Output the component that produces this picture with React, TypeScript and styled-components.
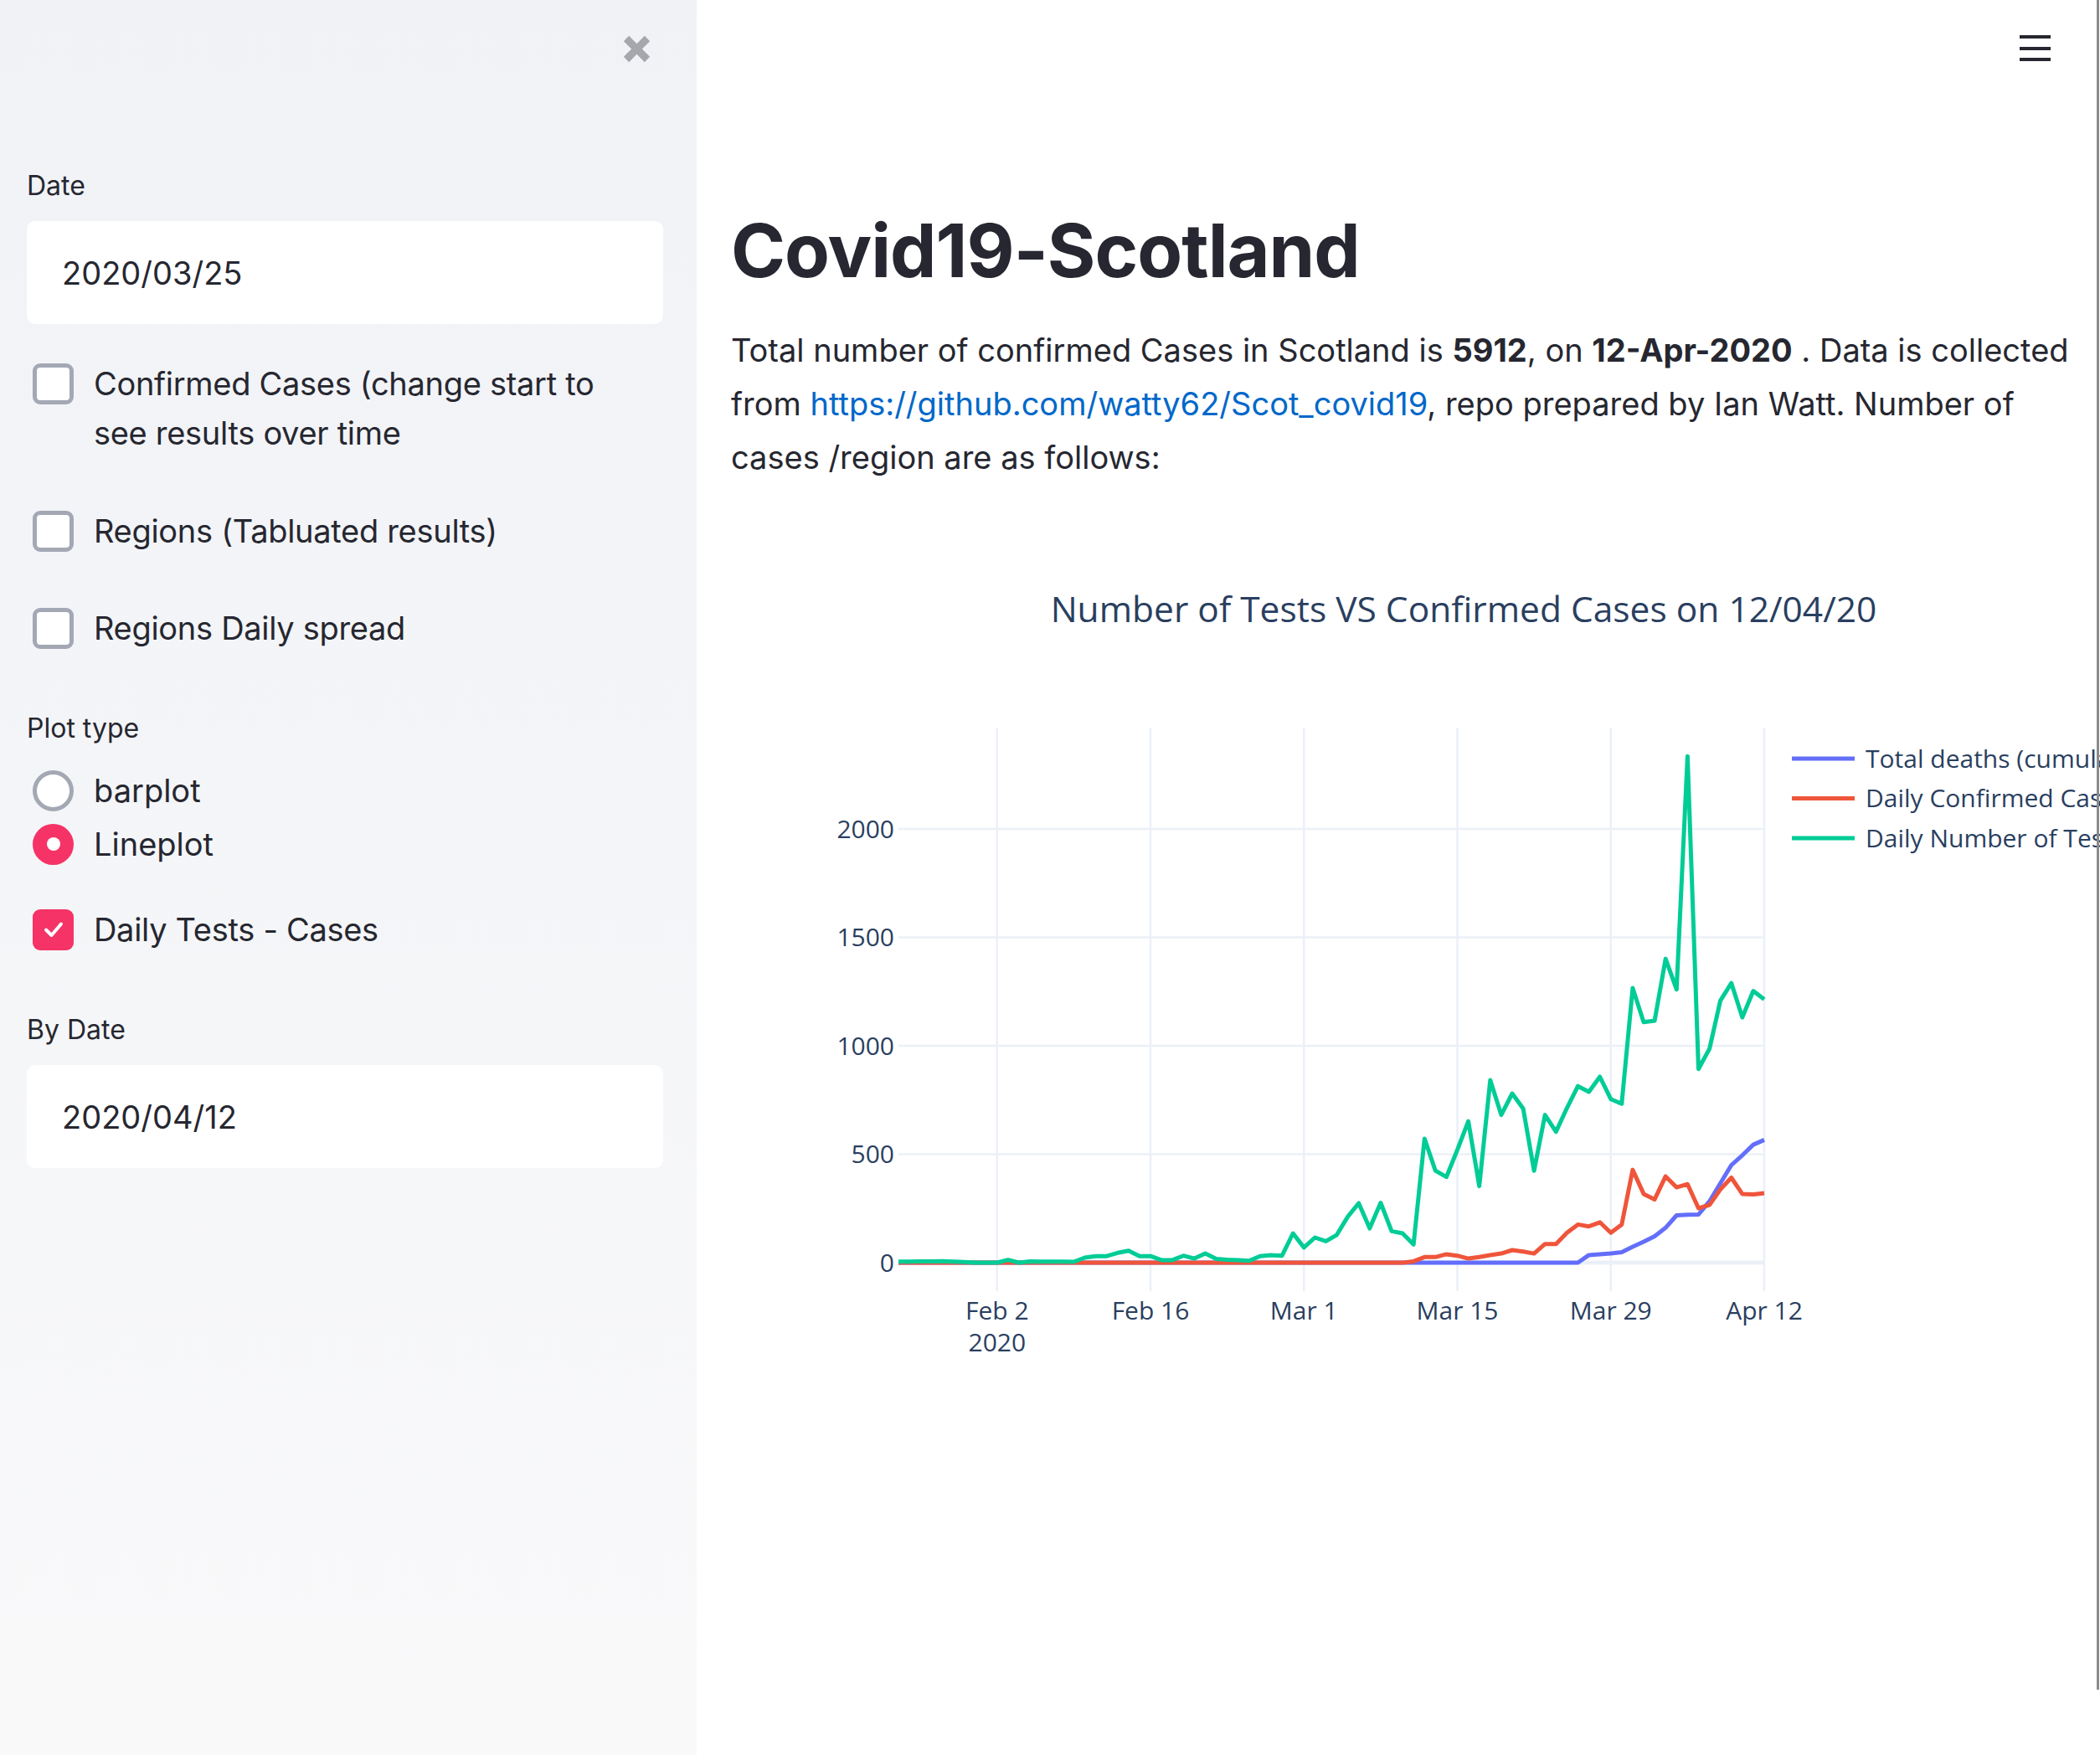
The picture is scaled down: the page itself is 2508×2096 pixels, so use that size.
import React from "react";
import styled, { createGlobalStyle } from "styled-components";

const GlobalStyle = createGlobalStyle`
	html,
	body {
		margin: 0;
		padding: 0;
		overflow: hidden;
	}

	body {
		font-family: Inter, "Noto Sans", sans-serif;
		color: #262730;
		background: #ffffff;
	}

	* {
		box-sizing: border-box;
	}
`;

/* chart data, one value per day from Jan 24 to Apr 12 */
const tests = [
	5, 5, 6, 6, 7, 5, 3, 0, 0, 0, 13, 0, 6, 5, 5, 5, 4, 23, 30, 30, 45, 55, 30, 30, 12, 12, 32, 19, 42, 17, 14, 12, 9, 30,
	35, 32, 135, 70, 116, 99, 128, 212, 274, 158, 276, 145, 135, 84, 572, 424, 395, 520, 652, 353, 842, 681, 780, 711, 424,
	681, 604, 713, 814, 788, 857, 754, 733, 1266, 1109, 1116, 1401, 1260, 2335, 893, 986, 1208, 1289, 1131, 1253, 1214,
];

const confirmed = [
	...Array(47).fill(0),
	6, 26, 26, 39, 32, 19, 26, 35, 42, 58, 51, 42, 86, 86, 138, 176, 167, 186, 138, 176, 428, 317, 292, 398, 347, 362, 251,
	266, 338, 392, 317, 315, 321,
];

const deaths = [
	...Array(63).fill(0),
	35, 39, 42, 48, 73, 96, 122, 161, 218, 221, 222, 283, 366, 450, 495, 544, 566,
];

const PLOT_LEFT = 200;
const PLOT_RIGHT = 1234;
const PLOT_TOP = 250;
const PLOT_BOTTOM = 923;
const ZERO_Y = 889;
const PX_PER_UNIT = 0.259;
const DAYS = 79;

const dayX = (d: number) => PLOT_LEFT + (d * (PLOT_RIGHT - PLOT_LEFT)) / DAYS;
const valY = (v: number) => ZERO_Y - v * PX_PER_UNIT;
const toPoints = (values: number[]) => values.map((v, i) => `${dayX(i).toFixed(1)},${valY(v).toFixed(1)}`).join(" ");

const xTicks = [
	{ day: 9, label: "Feb 2", sub: "2020" },
	{ day: 23, label: "Feb 16" },
	{ day: 37, label: "Mar 1" },
	{ day: 51, label: "Mar 15" },
	{ day: 65, label: "Mar 29" },
	{ day: 79, label: "Apr 12" },
];

const yTicks = [0, 500, 1000, 1500, 2000];

const series = [
	{ name: "Total deaths (cumulative)", color: "#636efa", values: deaths },
	{ name: "Daily Confirmed Cases", color: "#ef553b", values: confirmed },
	{ name: "Daily Number of Tests", color: "#00cc96", values: tests },
];

const App: React.FC = () => {
	return (
		<>
			<GlobalStyle />
			<Page>
				<Sidebar>
					<CloseRow>
						<CloseButton aria-label="Close sidebar">
							<svg width="35" height="35" viewBox="0 0 35 35">
								<path d="M5 5 L30 30 M30 5 L5 30" stroke="#a5a7ad" strokeWidth="9" strokeLinecap="butt" />
							</svg>
						</CloseButton>
					</CloseRow>

					<WidgetLabel $mt={126}>Date</WidgetLabel>
					<DateField $mt={22}>2020/03/25</DateField>

					<CheckRow $mt={41.5}>
						<CheckBox $checked={false} />
						<CheckText>Confirmed Cases (change start to see results over time</CheckText>
					</CheckRow>
					<CheckRow $mt={58}>
						<CheckBox $checked={false} />
						<CheckText>Regions (Tabluated results)</CheckText>
					</CheckRow>
					<CheckRow $mt={57}>
						<CheckBox $checked={false} />
						<CheckText>Regions Daily spread</CheckText>
					</CheckRow>

					<WidgetLabel $mt={70.5}>Plot type</WidgetLabel>
					<RadioGroup $mt={22}>
						<RadioRow>
							<RadioDot $selected={false} />
							<span>barplot</span>
						</RadioRow>
						<RadioRow>
							<RadioDot $selected={true} />
							<span>Lineplot</span>
						</RadioRow>
					</RadioGroup>

					<CheckRow $mt={40.5}>
						<CheckBox $checked={true}>
							<svg width="28" height="28" viewBox="0 0 28 28">
								<path d="M5 14.5 L11.5 21 L23 7.5" stroke="#ffffff" strokeWidth="4" fill="none" strokeLinecap="round" strokeLinejoin="round" />
							</svg>
						</CheckBox>
						<CheckText>Daily Tests - Cases</CheckText>
					</CheckRow>

					<WidgetLabel $mt={70.5}>By Date</WidgetLabel>
					<DateField $mt={22}>2020/04/12</DateField>
				</Sidebar>

				<Main>
					<TopBar>
						<MenuButton aria-label="Menu">
							<MenuLine />
							<MenuLine />
							<MenuLine />
						</MenuButton>
					</TopBar>

					<Content>
						<Title>Covid19-Scotland</Title>
						<Paragraph>
							Total number of confirmed Cases in Scotland is <strong>5912</strong>, on <strong>12-Apr-2020</strong> . Data is collected
							<br />
							from <Link href="#">https://github.com/watty62/Scot_covid19</Link>, repo prepared by Ian Watt. Number of
							<br />
							cases /region are as follows:
						</Paragraph>

						<ChartBox>
							<svg width="1750" height="1125" viewBox="0 0 1750 1125">
								<ChartTitle x="875" y="124" textAnchor="middle">
									Number of Tests VS Confirmed Cases on 12/04/20
								</ChartTitle>

								{xTicks.map((t) => (
									<line key={t.label} x1={dayX(t.day)} x2={dayX(t.day)} y1={PLOT_TOP} y2={PLOT_BOTTOM} stroke="#ebf0f8" strokeWidth="2.5" />
								))}
								{yTicks
									.filter((v) => v > 0)
									.map((v) => (
										<line key={v} x1={PLOT_LEFT} x2={PLOT_RIGHT} y1={valY(v)} y2={valY(v)} stroke="#ebf0f8" strokeWidth="2.5" />
									))}
								<line x1={PLOT_LEFT} x2={PLOT_RIGHT} y1={ZERO_Y} y2={ZERO_Y} stroke="#ebf0f8" strokeWidth="5" />

								{series.map((s) => (
									<polyline key={s.name} points={toPoints(s.values)} fill="none" stroke={s.color} strokeWidth="5" strokeLinejoin="round" />
								))}

								{yTicks.map((v) => (
									<TickText key={v} x="195" y={valY(v) + 10.5} textAnchor="end">
										{v}
									</TickText>
								))}
								{xTicks.map((t) => (
									<g key={t.label}>
										<TickText x={dayX(t.day)} y="957" textAnchor="middle">
											{t.label}
										</TickText>
										{t.sub && (
											<TickText x={dayX(t.day)} y="995" textAnchor="middle">
												{t.sub}
											</TickText>
										)}
									</g>
								))}

								{series.map((s, i) => (
									<g key={s.name}>
										<line x1="1267" x2="1342" y1={287 + i * 47.5} y2={287 + i * 47.5} stroke={s.color} strokeWidth="5" />
										<TickText x="1355" y={297.5 + i * 47.5}>
											{s.name}
										</TickText>
									</g>
								))}
							</svg>
						</ChartBox>
					</Content>

					<ScrollThumb />
				</Main>
			</Page>
		</>
	);
};

const Page = styled.div`
	display: flex;
	width: 2508px;
	height: 2096px;
`;

const Sidebar = styled.aside`
	width: 832px;
	flex-shrink: 0;
	display: flex;
	flex-direction: column;
	padding: 42px 40px 0 32px;
	background: linear-gradient(180deg, #f0f2f6 0%, #f9f9fa 100%);
`;

const CloseRow = styled.div`
	display: flex;
	justify-content: flex-end;
	padding-right: 14px;
	height: 34px;
`;

const CloseButton = styled.div`
	width: 35px;
	height: 35px;
	margin-top: -1px;
	svg {
		display: block;
	}
`;

const WidgetLabel = styled.div<{ $mt: number }>`
	margin-top: ${(p) => p.$mt}px;
	font-size: 32px;
	line-height: 40px;
	color: #262730;
`;

const DateField = styled.div<{ $mt: number }>`
	margin-top: ${(p) => p.$mt}px;
	height: 123px;
	display: flex;
	align-items: center;
	padding-left: 42px;
	background: #ffffff;
	border-radius: 10px;
	font-size: 38px;
	color: #262730;
`;

const CheckRow = styled.label<{ $mt: number }>`
	margin-top: ${(p) => p.$mt}px;
	display: flex;
	align-items: flex-start;
	gap: 24px;
	padding-left: 7px;
	font-size: 38px;
	line-height: 59px;
	letter-spacing: -0.3px;
	color: #262730;
`;

const CheckBox = styled.span<{ $checked: boolean }>`
	flex-shrink: 0;
	width: 49px;
	height: 49px;
	margin-top: 5px;
	display: flex;
	align-items: center;
	justify-content: center;
	border-radius: 9px;
	background: ${(p) => (p.$checked ? "#f63366" : "#ffffff")};
	border: ${(p) => (p.$checked ? "none" : "5px solid #a3a8b4")};
	svg {
		display: block;
	}
`;

const CheckText = styled.span`
	max-width: 630px;
`;

const RadioGroup = styled.div<{ $mt: number }>`
	margin-top: ${(p) => p.$mt}px;
	display: flex;
	flex-direction: column;
`;

const RadioRow = styled.label`
	height: 64px;
	display: flex;
	align-items: center;
	gap: 24px;
	padding-left: 7px;
	font-size: 38px;
	color: #262730;
`;

const RadioDot = styled.span<{ $selected: boolean }>`
	flex-shrink: 0;
	width: 49px;
	height: 49px;
	border-radius: 50%;
	display: flex;
	align-items: center;
	justify-content: center;
	background: ${(p) => (p.$selected ? "#f63366" : "#ffffff")};
	border: ${(p) => (p.$selected ? "none" : "5px solid #a3a8b4")};

	&::after {
		content: "";
		display: ${(p) => (p.$selected ? "block" : "none")};
		width: 16px;
		height: 16px;
		border-radius: 50%;
		background: #ffffff;
	}
`;

const Main = styled.main`
	position: relative;
	flex: 1;
	min-width: 0;
	overflow: hidden;
	background: #ffffff;
`;

const TopBar = styled.div`
	height: 120px;
	display: flex;
	justify-content: flex-end;
	padding: 42px 59px 0 0;
`;

const MenuButton = styled.div`
	width: 37px;
	height: 31px;
	display: flex;
	flex-direction: column;
	justify-content: space-between;
`;

const MenuLine = styled.span`
	display: block;
	height: 4px;
	background: #262730;
`;

const Content = styled.div`
	padding: 126px 0 0 41px;
`;

const Title = styled.h1`
	margin: 0;
	font-size: 88px;
	font-weight: 700;
	line-height: 106px;
	letter-spacing: -1px;
	color: #262730;
`;

const Paragraph = styled.p`
	margin: 34px 0 0;
	width: 1700px;
	font-size: 38px;
	line-height: 64px;
	color: #262730;

	strong {
		font-weight: 700;
	}
`;

const Link = styled.a`
	color: #0068c9;
	text-decoration: none;
`;

const ChartBox = styled.div`
	margin-top: 41px;
	width: 1750px;
	height: 1125px;

	svg {
		display: block;
	}
`;

const ChartTitle = styled.text`
	font-family: "Open Sans", sans-serif;
	font-size: 42.5px;
	fill: #2a3f5f;
`;

const TickText = styled.text`
	font-family: "Open Sans", sans-serif;
	font-size: 30px;
	fill: #2a3f5f;
`;

const ScrollThumb = styled.div`
	position: absolute;
	top: 0;
	right: 1px;
	width: 3px;
	height: 2018px;
	background: #8b8b8b;
`;

export default App;
